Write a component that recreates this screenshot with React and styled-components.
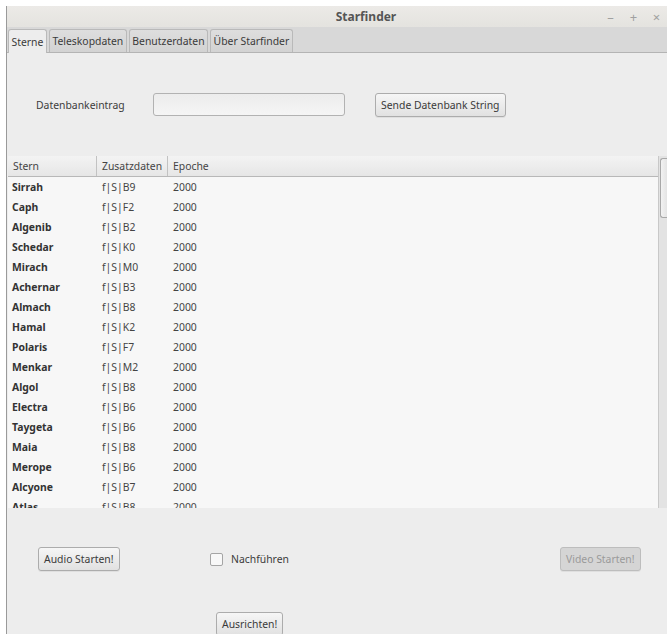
import React, { useState } from 'react';
import styled, { createGlobalStyle } from 'styled-components';

const GlobalStyle = createGlobalStyle`
  html, body {
    margin: 0;
    padding: 0;
    background: #ffffff;
    overflow: hidden;
  }
  body {
    font-family: "Noto Sans", "Open Sans", sans-serif;
    font-size: 10.4px;
    color: #3c3c3c;
  }
`;

const Window = styled.div`
  margin: 6px 0 0 6px;
  height: 628px;
  border-left: 1px solid #9a9a9a;
  display: flex;
  flex-direction: column;
  background: #ededed;
`;

const TitleBar = styled.div`
  height: 21px;
  flex: none;
  display: flex;
  align-items: center;
  position: relative;
  padding-left: 58px;
  background: linear-gradient(#eceae7, #e4e3df);
`;

const Title = styled.div`
  flex: 1;
  text-align: center;
  font-size: 12px;
  font-weight: bold;
  color: #555;
`;

const Controls = styled.div`
  position: absolute;
  right: -1px;
  top: 2px;
  display: flex;
  color: #a0a0a0;
  font-size: 13px;
`;

const Control = styled.span`
  width: 23px;
  text-align: center;
`;

const TabStrip = styled.div`
  height: 26px;
  flex: none;
  display: flex;
  align-items: flex-end;
  gap: 2px;
  padding-left: 1px;
  background: #d8d8d8;
  border-bottom: 1px solid #b4b4b4;
  box-sizing: border-box;
`;

const Tab = styled.div`
  height: ${p => (p.$active ? '24px' : '23px')};
  box-sizing: border-box;
  padding: 0 2.5px;
  display: flex;
  align-items: center;
  border: 1px solid #b9b9b9;
  border-bottom: none;
  border-radius: 3px 3px 0 0;
  background: ${p => (p.$active ? '#ededed' : 'linear-gradient(#dedede, #d3d3d3)')};
  color: #3a3a3a;
  margin-bottom: ${p => (p.$active ? '-1px' : '0')};
`;

const FormRow = styled.div`
  height: 103px;
  flex: none;
  display: flex;
  align-items: center;
  padding-left: 29px;
`;

const Label = styled.span`
  width: 117px;
`;

const TextInput = styled.input`
  width: 192px;
  height: 23px;
  box-sizing: border-box;
  border: 1px solid #b2b2b2;
  border-radius: 3px;
  background: linear-gradient(#ececec, #f5f5f5);
  margin-right: 30px;
  outline: none;
`;

const Button = styled.button`
  height: 24px;
  box-sizing: border-box;
  padding: 0 5px;
  border: 1px solid ${p => (p.disabled ? '#bdbdbd' : '#acacac')};
  border-radius: 3px;
  background: ${p => (p.disabled ? '#d5d5d5' : 'linear-gradient(#f6f6f6, #e1e1e1)')};
  color: ${p => (p.disabled ? '#9a9a9a' : '#3a3a3a')};
  font-family: "Noto Sans", "Open Sans", sans-serif;
  font-size: 10.4px;
  box-shadow: 0 1px 0 rgba(0, 0, 0, 0.06);
  justify-self: start;
`;

const TableArea = styled.div`
  height: 352px;
  flex: none;
  display: flex;
  margin-left: 1px;
  overflow: hidden;
`;

const Table = styled.div`
  flex: 1;
  background: #f7f7f7;
  border-right: 1px solid #c8c8c8;
  overflow: hidden;
`;

const HeaderRow = styled.div`
  height: 21px;
  display: grid;
  grid-template-columns: 89px 71px 1fr;
  background: linear-gradient(#f3f3f3, #e6e6e6);
  border-bottom: 1px solid #b8b8b8;
  box-sizing: border-box;
`;

const HeaderCell = styled.div`
  display: flex;
  align-items: center;
  padding-left: 5px;
  border-right: ${p => (p.$last ? 'none' : '1px solid #c2c2c2')};
  color: #444;
`;

const Row = styled.div`
  height: 20px;
  display: grid;
  grid-template-columns: 89px 71px 1fr;
  align-items: center;
`;

const Cell = styled.div`
  padding-left: ${p => (p.$bold ? '4px' : '5px')};
  font-weight: ${p => (p.$bold ? 'bold' : 'normal')};
  color: ${p => (p.$bold ? '#333' : '#444')};
`;

const ScrollTrack = styled.div`
  width: 8px;
  flex: none;
  background: #e3e3e3;
  padding-top: 2px;
`;

const ScrollThumb = styled.div`
  height: 58px;
  margin-left: 1px;
  border: 1px solid #a8a8a8;
  border-right: none;
  border-radius: 3px 0 0 3px;
  background: linear-gradient(90deg, #f2f2f2, #e4e4e4);
`;

const BottomPanel = styled.div`
  flex: 1;
  display: grid;
  grid-template-columns: 172px 350px auto;
  grid-template-rows: 24px 24px;
  row-gap: 41px;
  align-items: center;
  padding: 39px 0 0 31px;
`;

const CheckRow = styled.label`
  display: flex;
  align-items: center;
  gap: 8px;
`;

const Box = styled.span`
  width: 11px;
  height: 11px;
  border: 1px solid #a5a5a5;
  border-radius: 2px;
  background: #f8f8f8;
`;

const AlignButton = styled(Button)`
  grid-column: 2;
  margin-left: 6px;
`;

const stars = [
  ['Sirrah', 'B9'], ['Caph', 'F2'], ['Algenib', 'B2'], ['Schedar', 'K0'],
  ['Mirach', 'M0'], ['Achernar', 'B3'], ['Almach', 'B8'], ['Hamal', 'K2'],
  ['Polaris', 'F7'], ['Menkar', 'M2'], ['Algol', 'B8'], ['Electra', 'B6'],
  ['Taygeta', 'B6'], ['Maia', 'B8'], ['Merope', 'B6'], ['Alcyone', 'B7'],
  ['Atlas', 'B8'],
];

const tabs = ['Sterne', 'Teleskopdaten', 'Benutzerdaten', 'Über Starfinder'];

const App = () => {
  const [entry, setEntry] = useState('');

  return (
    <>
      <GlobalStyle />
      <Window>
        <TitleBar>
          <Title>Starfinder</Title>
          <Controls>
            <Control>–</Control>
            <Control>+</Control>
            <Control>×</Control>
          </Controls>
        </TitleBar>
        <TabStrip>
          {tabs.map((t, i) => (
            <Tab key={t} $active={i === 0}>{t}</Tab>
          ))}
        </TabStrip>
        <FormRow>
          <Label>Datenbankeintrag</Label>
          <TextInput value={entry} onChange={e => setEntry(e.target.value)} />
          <Button>Sende Datenbank String</Button>
        </FormRow>
        <TableArea>
          <Table>
            <HeaderRow>
              <HeaderCell>Stern</HeaderCell>
              <HeaderCell>Zusatzdaten</HeaderCell>
              <HeaderCell $last>Epoche</HeaderCell>
            </HeaderRow>
            {stars.map(([name, cls]) => (
              <Row key={name}>
                <Cell $bold>{name}</Cell>
                <Cell>f|S|{cls}</Cell>
                <Cell>2000</Cell>
              </Row>
            ))}
          </Table>
          <ScrollTrack>
            <ScrollThumb />
          </ScrollTrack>
        </TableArea>
        <BottomPanel>
          <Button>Audio Starten!</Button>
          <CheckRow>
            <Box />
            Nachführen
          </CheckRow>
          <Button disabled>Video Starten!</Button>
          <AlignButton>Ausrichten!</AlignButton>
        </BottomPanel>
      </Window>
    </>
  );
};

export default App;
